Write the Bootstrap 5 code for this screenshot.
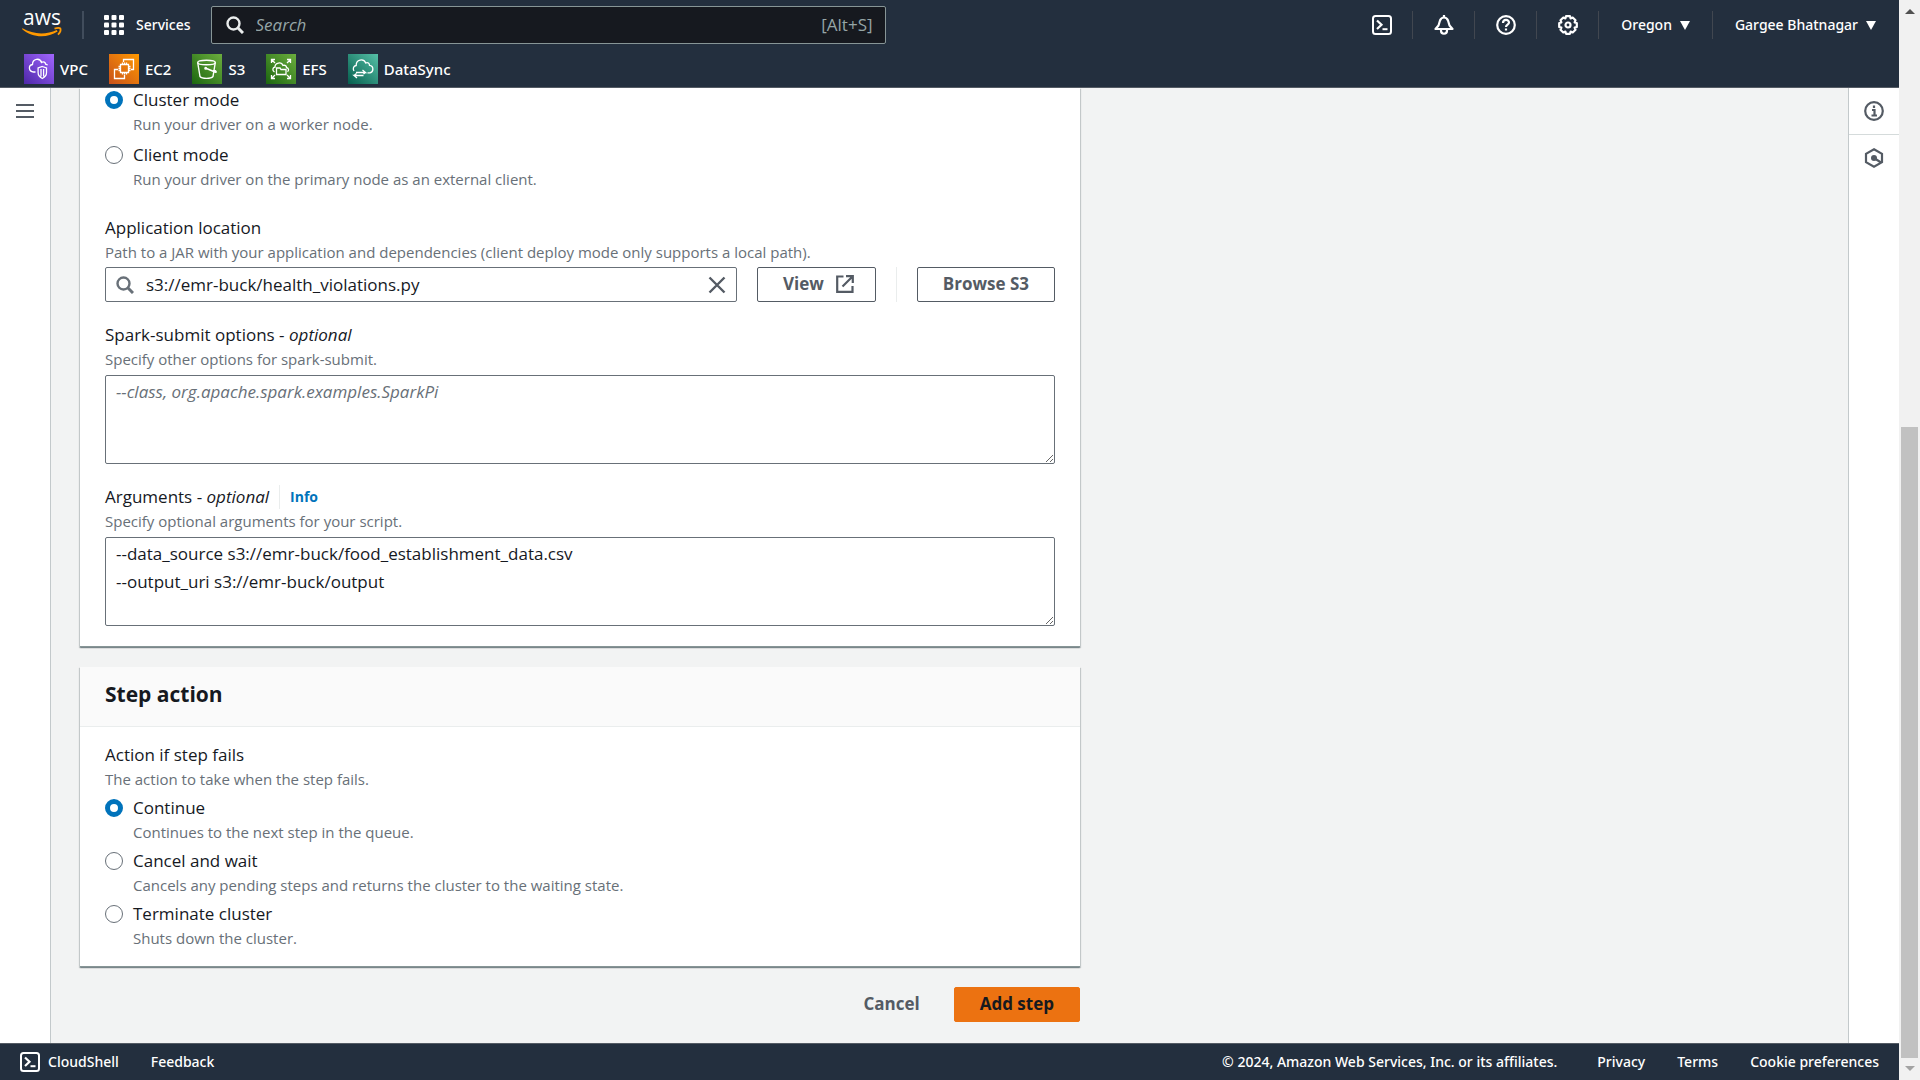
<!DOCTYPE html>
<html lang="en">
<head>
<meta charset="utf-8">
<meta name="viewport" content="width=device-width, initial-scale=1">
<title>Add step</title>
<link href="https://cdn.jsdelivr.net/npm/bootstrap@5.3.0/dist/css/bootstrap.min.css" rel="stylesheet">
<style>
  body { font-family: "Open Sans", "Noto Sans", sans-serif; font-size: 17px; line-height: 24px; color: #16191f; background: #f2f3f3; }
  svg { display: block; flex: none; }
  .console-bar { background: #232f3e; color: #fff; font-family: "Noto Sans", "Open Sans", sans-serif; font-size: 14px; font-weight: 500; line-height: 20px; }
  .console-bar a, .console-bar button { color: #fff; text-decoration: none; }
  .plain-btn { background: none; border: 0; padding: 0; display: flex; align-items: center; font-weight: inherit; }
  header.console-bar { border-bottom: 1px solid #545b64; }
  footer.console-bar { border-top: 1px solid #545b64; padding: 8px 20px; }
  .top-row { padding: 6px 23px 6px 22px; height: 50px; align-items: start; }
  .top-row > * { height: 38px; }
  .brand-logo { overflow: visible; }
  .tools > * { display: flex; align-items: center; height: 28px; margin-top: 5px; border-left: 1px solid #414750; }
  .tools > :first-child { border-left: 0; }
  .tool-icon { padding: 0 20px 0 21px; }
  .tool-menu { padding: 0 22px; }
  .tool-menu:last-child { padding-right: 0; }
  .rule { width: 2px; background: #414d5c; margin: 5px 20px; height: 28px !important; }
  .search-box { width: 675px; margin-left: 20px; background: #16191f; border: 1px solid #879596; border-radius: 2px; padding: 0 12px 0 14px; color: #95a5a6; font-family: "Open Sans", sans-serif; font-size: 17px; font-weight: 400; }
  .search-box input { background: none; border: 0; outline: 0; color: #fff; min-width: 0; }
  .search-box input::placeholder { color: #95a5a6; font-style: italic; opacity: 1; }
  .favorites { padding: 4px 24px 3px; gap: 21px; font-size: 15px; }
  .favorites a { gap: 6px; }
  .side-rail { width: 51px; background: #fff; color: #545b64; }
  .rail-left { border-right: 1px solid #c3c9cb; padding: 13px 0 0 15px; }
  .rail-right { border-left: 1px solid #c3c9cb; }
  .rail-right button { justify-content: center; height: 46px; width: 100%; color: #545b64; }
  .rail-right button + button { border-top: 1px solid #d5dbdb; }
  .step-form { max-width: 1000px; margin-left: 29px; padding-bottom: 20px; }
  .panel { background: #fff; margin-bottom: 20px; box-shadow: 0 1px 1px 0 rgba(0,28,36,.3), 1px 1px 1px 0 rgba(0,28,36,.15), -1px 1px 1px 0 rgba(0,28,36,.15); border-bottom: 1px solid #879596; padding: 0 25px 20px; }
  .panel-titled { padding-bottom: 15px; }
  .panel-title { margin: 0 -25px 16px; padding: 14px 25px 19px; background: #fafafa; border-bottom: 1px solid #eaeded; font-size: 21px; line-height: 26px; font-weight: 700; }
  .hint { font-size: 15px; line-height: 25px; color: #687078; }
  .field + .field { margin-top: 21px; }
  .choices { display: grid; gap: 4px; }
  .choices.field { gap: 6px; padding-bottom: 3px; }
  .choice { display: grid; grid-template-columns: 18px 1fr; column-gap: 10px; align-items: center; }
  .choice .hint { grid-column: 2; }
  .choice input { appearance: none; width: 18px; height: 18px; margin: 0; border: 1px solid #687078; border-radius: 50%; background: #fff; }
  .choice input:checked { border: 5px solid #0073bb; }
  .text-field, .resource-box { border: 1px solid #687078; border-radius: 2px; background: #fff; color: #16191f; }
  .text-field { display: block; width: 100%; height: 89px; padding: 2px 10px; margin-top: 3px; line-height: 28px; }
  .text-field::placeholder { color: #687078; font-style: italic; opacity: 1; }
  .resource-box { height: 35px; padding: 0 10px; gap: 12px; }
  .resource-box input { border: 0; outline: 0; min-width: 0; padding: 0; color: #16191f; }
  .resource-row { gap: 20px; margin-top: 2px; }
  .split-line { width: 1px; background: #eaeded; }
  .info-link { font-size: 14px; font-weight: 700; color: #0073bb; text-decoration: none; border-left: 1px solid #eaeded; margin-left: 10px; padding-left: 10px; }
  .act { font-size: 17px; line-height: 24px; font-weight: 700; border-radius: 2px; padding: 4px 25px 5px; }
  .act-outline, .act-outline:hover { color: #545b64; border: 1px solid #545b64; background: #fff; }
  .act-outline svg { margin: 0 -4px 0 12px; }
  .act-link { color: #545b64; border-color: transparent; }
  .act-primary { background: #ec7211; border-color: #ec7211; color: #16191f; }
  .scroll-track { width: 21px; background: #f1f1f1; }
  .scroll-gap { flex: 405 0 0; }
  .scroll-thumb { margin: 0 2px; background: #c1c1c1; flex: 632 0 0; }
  .arrow { width: 0; margin: 0 auto; border: 5px solid transparent; }
  .arrow-up { border-bottom-color: #505050; }
  .arrow-down { border-top-color: #a3a3a3; }
</style>
<script src="https://cdn.jsdelivr.net/npm/bootstrap@5.3.0/dist/js/bootstrap.bundle.min.js"></script>
</head>
<body>
<svg width="0" height="0" class="position-absolute" aria-hidden="true">
  <defs>
    <linearGradient id="gv" x1="0" y1="1" x2="1" y2="0"><stop stop-color="#4d27a8"/><stop offset="1" stop-color="#a166ff"/></linearGradient>
    <linearGradient id="ge" x1="0" y1="1" x2="1" y2="0"><stop stop-color="#c8511b"/><stop offset="1" stop-color="#f90"/></linearGradient>
    <linearGradient id="gs" x1="0" y1="1" x2="1" y2="0"><stop stop-color="#1b660f"/><stop offset="1" stop-color="#6cae3e"/></linearGradient>
    <linearGradient id="gd" x1="0" y1="1" x2="1" y2="0"><stop stop-color="#055f4e"/><stop offset="1" stop-color="#56c0a7"/></linearGradient>
    <symbol id="shell" viewBox="0 0 20 20"><g fill="none" stroke="currentColor" stroke-width="2"><rect x="1" y="1" width="18" height="18" rx="2.5"/><path d="M5 5.500l4.500 4.300L5 14" stroke-width="2.200"/><path d="M10.500 14.200h5"/></g></symbol>
    <symbol id="lens" viewBox="0 0 18 18"><g fill="none" stroke="currentColor"><circle cx="7.500" cy="7.500" r="6" stroke-width="2.400"/><path d="M11.800 11.800l5.200 5.200" stroke-width="3"/></g></symbol>
    <symbol id="down" viewBox="0 0 10 9"><path d="M0 0h10L5 9z" fill="currentColor"/></symbol>
  </defs>
</svg>

<div class="d-flex min-vh-100">
  <div class="d-flex flex-column flex-grow-1">
    <header class="console-bar">
      <div class="top-row d-flex">
        <a href="#" aria-label="AWS home">
          <svg class="brand-logo" width="40" height="38" viewBox="0 0 40 38"><text x="1" y="19" font-family="Open Sans" font-size="21" font-weight="500" fill="#fff">aws</text><path d="M.5 22.300C11 28.500 24 29 34.800 24l.8 1.600C25 32.500 10 32 0 23z" fill="#f90"/><path d="M32.500 22.600c3-.9 5.200-.8 5.900-.1.500 1.500-.7 4.500-2.400 6.200" fill="none" stroke="#f90" stroke-width="1.800"/></svg>
        </a>
        <span class="rule"></span>
        <button class="plain-btn" type="button">
          <svg width="20" height="20" fill="#fff" class="me-2"><rect width="5" height="5" rx="1"/><rect x="7.500" width="5" height="5" rx="1"/><rect x="15" width="5" height="5" rx="1"/><rect y="7.500" width="5" height="5" rx="1"/><rect x="7.500" y="7.500" width="5" height="5" rx="1"/><rect x="15" y="7.500" width="5" height="5" rx="1"/><rect y="15" width="5" height="5" rx="1"/><rect x="7.500" y="15" width="5" height="5" rx="1"/><rect x="15" y="15" width="5" height="5" rx="1"/></svg>
          <span class="ps-1">Services</span>
        </button>
        <label class="search-box d-flex align-items-center">
          <svg width="18" height="18" color="#eaeded" class="me-2"><use href="#lens"/></svg>
          <input type="search" class="flex-grow-1 ps-1" placeholder="Search" aria-label="Search">
          <span>[Alt+S]</span>
        </label>
        <nav class="tools d-flex ms-auto">
          <button class="plain-btn tool-icon" type="button" aria-label="CloudShell"><svg width="20" height="20"><use href="#shell"/></svg></button>
          <button class="plain-btn tool-icon" type="button" aria-label="Notifications"><svg width="20" height="20" viewBox="0 0 20 20" fill="none" stroke="currentColor" stroke-width="2.200" stroke-linejoin="round"><path d="M10 0v3M1.500 14h17l-3-3.500L14 5.500C13 3 11.500 2.500 10 2.500S7 3 6 5.500l-1.500 5z"/><path d="M7 14v1.500c0 4.300 6 4.300 6 0V14"/></svg></button>
          <button class="plain-btn tool-icon" type="button" aria-label="Help"><svg width="20" height="20" viewBox="0 0 20 20" fill="none" stroke="currentColor" stroke-width="2.200"><circle cx="10" cy="10" r="8.800"/><path d="M7 8c0-4 6-4 6-.5 0 2.200-3 2-3 4.500M10 13.500v2"/></svg></button>
          <button class="plain-btn tool-icon" type="button" aria-label="Settings"><svg width="20" height="20" viewBox="0 0 20 20" fill="none" stroke="currentColor"><path stroke-width="2.200" stroke-linejoin="round" d="M8 1.200h4l.6 2.200 2.100-.9 2.800 2.800-.9 2.100 2.200.6v4l-2.200.6.9 2.100-2.800 2.800-2.100-.9-.6 2.200H8l-.6-2.200-2.100.9-2.800-2.800.9-2.100-2.200-.6V8l2.200-.6-.9-2.100 2.800-2.800 2.100.9z"/><circle cx="10" cy="10" r="2.500" stroke-width="2.200"/></svg></button>
          <button class="plain-btn tool-menu" type="button">Oregon<svg width="10" height="9" class="ms-2"><use href="#down"/></svg></button>
          <button class="plain-btn tool-menu" type="button">Gargee Bhatnagar<svg width="10" height="9" class="ms-2"><use href="#down"/></svg></button>
        </nav>
      </div>
      <nav class="favorites d-flex">
        <a href="#" class="d-flex align-items-center"><svg width="30" height="30" fill="none" stroke="#fff" stroke-width="1.300"><path fill="url(#gv)" stroke="none" d="M0 0h30v30H0z"/><path d="M11.500 18H9.500C4.500 17.500 4 11.500 8.500 10.500 8.500 4.500 16 3.500 17.500 8.500c2-1.500 4 0 4.200 1.700l2 .8"/><path d="M18.300 12.500l4.200 1.500v4.500c0 3-1.800 4.800-4.200 6-2.400-1.200-4.200-3-4.200-6V14zM17 15v7.500M19.600 15v7.500"/></svg>VPC</a>
        <a href="#" class="d-flex align-items-center"><svg width="30" height="30" fill="none" stroke="#fff" stroke-width="1.300"><path fill="url(#ge)" stroke="none" d="M0 0h30v30H0z"/><path d="M11.500 10.500h8v8h-8zM13.500 10.500V8.500M15.500 10.500V8.500M17.500 10.500V8.500M13.500 20.500v-2M15.500 20.500v-2M17.500 20.500v-2M9.500 12.500h2M9.500 14.500h2M9.500 16.500h2M19.500 12.500h2M19.500 14.500h2M19.500 16.500h2"/><path d="M14.500 8V5.500h10v10H22M9 15.500H5.500v9h10V21"/></svg>EC2</a>
        <a href="#" class="d-flex align-items-center"><svg width="30" height="30" fill="none" stroke="#fff" stroke-width="1.400"><path fill="url(#gs)" stroke="none" d="M0 0h30v30H0z"/><ellipse cx="14.500" cy="8.500" rx="8.800" ry="2.200"/><path d="M5.700 8.500L8 22.500c2 2.500 11 2.500 13 0l2.300-14M14.500 14.500l8.500 3.500c2 .8 1.500-.8-1-2"/><circle cx="13.700" cy="14.200" r=".8"/></svg>S3</a>
        <a href="#" class="d-flex align-items-center"><svg width="30" height="30" fill="none" stroke="#fff" stroke-width="1.300"><path fill="url(#gs)" stroke="none" d="M0 0h30v30H0z"/><path d="M9 9L5.500 5.500M5.500 9V5.500H9M21 9l3.500-3.500M21 5.500h3.500V9M9 21l-3.500 3.500M5.500 21v3.500H9M21 21l3.500 3.500M24.500 21v3.500H21"/><path d="M8.500 18c-2.500-1.500-2-4.500.5-5 0-4.500 6.500-5.500 8-1.500 2-.8 3.500.5 3.500 2 2.500.7 2.500 3 1 4.200M10.500 20.500v-6.500h3.500l1 1.500h5v5z"/></svg>EFS</a>
        <a href="#" class="d-flex align-items-center"><svg width="30" height="30" fill="none" stroke="#fff" stroke-width="1.300"><path fill="url(#gd)" stroke="none" d="M0 0h30v30H0z"/><path d="M6 17c-1.500-2.500-.5-5 2.200-5.500C8 5.500 15.500 4 17.800 9c2-1 3.700.3 3.700 2.300 4.500.7 4.300 6.500.5 7.500h-2.500"/><path d="M8 18.500h9.500l-3-2.500M15.500 21.500H6l3 2.500M6 21.500l2.500-2M17.500 18.500l-2 1.500"/></svg>DataSync</a>
      </nav>
    </header>

    <div class="d-flex flex-grow-1">
      <aside class="side-rail rail-left">
        <button class="plain-btn" type="button" aria-label="Open navigation"><svg width="20" height="20" stroke="#545b64" stroke-width="2"><path d="M1 4h18M1 10h18M1 16h18"/></svg></button>
      </aside>

      <main class="flex-grow-1">
        <form class="step-form">
          <section class="panel">
            <div class="field choices">
              <div class="choice">
                <input type="radio" name="mode" id="m1" checked><label for="m1">Cluster mode</label>
                <div class="hint">Run your driver on a worker node.</div>
              </div>
              <div class="choice">
                <input type="radio" name="mode" id="m2"><label for="m2">Client mode</label>
                <div class="hint">Run your driver on the primary node as an external client.</div>
              </div>
            </div>
            <div class="field">
              <label class="d-block" for="loc">Application location</label>
              <div class="hint">Path to a JAR with your application and dependencies (client deploy mode only supports a local path).</div>
              <div class="resource-row d-flex">
                <div class="resource-box d-flex align-items-center flex-grow-1">
                  <svg width="18" height="18" color="#687078"><use href="#lens"/></svg>
                  <input id="loc" type="text" class="flex-grow-1" value="s3://emr-buck/health_violations.py">
                  <button class="plain-btn" type="button" aria-label="Clear"><svg width="18" height="18" stroke="#545b64" stroke-width="2.400"><path d="M1.500 1.500l15 15M16.500 1.500l-15 15"/></svg></button>
                </div>
                <button class="btn act act-outline d-flex align-items-center" type="button">View<svg width="18" height="18" viewBox="0 0 18 18" fill="none" stroke="currentColor" stroke-width="2.200"><path d="M7.500 1.500H1.200v15.300h15.300V11M10 1.200h6.800V8M16.500 1.500L6.500 11.500"/></svg></button>
                <div class="split-line"></div>
                <button class="btn act act-outline" type="button">Browse S3</button>
              </div>
            </div>
            <div class="field">
              <label class="d-block" for="opts">Spark-submit options - <i>optional</i></label>
              <div class="hint">Specify other options for spark-submit.</div>
              <textarea class="text-field" id="opts" placeholder="--class, org.apache.spark.examples.SparkPi"></textarea>
            </div>
            <div class="field">
              <div class="d-flex"><label for="args">Arguments - <i>optional</i></label><a href="#" class="info-link">Info</a></div>
              <div class="hint">Specify optional arguments for your script.</div>
              <textarea class="text-field" id="args">--data_source s3://emr-buck/food_establishment_data.csv
--output_uri s3://emr-buck/output</textarea>
            </div>
          </section>

          <section class="panel panel-titled">
            <h2 class="panel-title">Step action</h2>
            <div>Action if step fails</div>
            <div class="hint">The action to take when the step fails.</div>
            <div class="choices mt-1">
              <div class="choice">
                <input type="radio" name="fail" id="f1" checked><label for="f1">Continue</label>
                <div class="hint">Continues to the next step in the queue.</div>
              </div>
              <div class="choice">
                <input type="radio" name="fail" id="f2"><label for="f2">Cancel and wait</label>
                <div class="hint">Cancels any pending steps and returns the cluster to the waiting state.</div>
              </div>
              <div class="choice">
                <input type="radio" name="fail" id="f3"><label for="f3">Terminate cluster</label>
                <div class="hint">Shuts down the cluster.</div>
              </div>
            </div>
          </section>

          <div class="d-flex justify-content-end gap-2">
            <button class="btn act act-link" type="button">Cancel</button>
            <button class="btn act act-primary" type="submit">Add step</button>
          </div>
        </form>
      </main>

      <aside class="side-rail rail-right">
        <button class="plain-btn" type="button" aria-label="Info"><svg width="20" height="20" viewBox="0 0 20 20" fill="none" stroke="currentColor"><circle cx="10" cy="10" r="8.800" stroke-width="2.200"/><path d="M10 4.500v2.500M8 9h2.500v5M7.500 14.500h5.500" stroke-width="2.200"/></svg></button>
        <button class="plain-btn" type="button" aria-label="Resources"><svg width="20" height="20" viewBox="0 0 20 20" fill="none" stroke="currentColor"><path d="M10 1.300l8 4.500v8.400l-8 4.500-8-4.500V5.800z" stroke-width="2.200"/><circle cx="10" cy="10" r="3" fill="currentColor" stroke="none"/><path d="M10 10l7 4.500" stroke-width="2.200"/></svg></button>
      </aside>
    </div>

    <footer class="console-bar d-flex align-items-center">
      <button class="plain-btn" type="button"><svg width="20" height="20" class="me-2"><use href="#shell"/></svg>CloudShell</button>
      <a href="#" class="ms-4 ps-2">Feedback</a>
      <span class="ms-auto">© 2024, Amazon Web Services, Inc. or its affiliates.</span>
      <a href="#" class="ms-4 ps-3">Privacy</a>
      <a href="#" class="ms-4 ps-2">Terms</a>
      <a href="#" class="ms-4 ps-2">Cookie preferences</a>
    </footer>
  </div>

  <div class="scroll-track d-flex flex-column py-1" aria-hidden="true">
    <div class="arrow arrow-up mb-2"></div>
    <div class="scroll-gap"></div>
    <div class="scroll-thumb"></div>
    <div class="arrow arrow-down mt-2"></div>
  </div>
</div>
</body>
</html>
